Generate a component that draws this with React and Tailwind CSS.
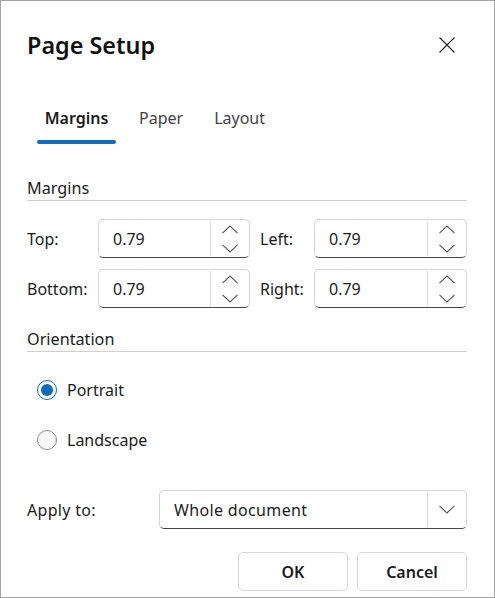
const font = { fontFamily: '"Noto Sans", "Open Sans", sans-serif' };

function Up() {
  return (
    <svg width="16" height="9" viewBox="0 0 16 9" fill="none" stroke="#555" strokeWidth="1.1">
      <path d="M0.5 8.2 L8 1 L15.5 8.2" />
    </svg>
  );
}
function Down() {
  return (
    <svg width="16" height="9" viewBox="0 0 16 9" fill="none" stroke="#555" strokeWidth="1.1">
      <path d="M0.5 0.8 L8 8 L15.5 0.8" />
    </svg>
  );
}

function Spin() {
  return (
    <div className="flex h-[39px] w-full rounded-[5px] border border-[#d4d4d4] border-b-[#444] bg-white">
      <div className="flex flex-1 items-center pl-[14px] text-[16px] text-[#1b1b1b]">0.79</div>
      <div className="my-px flex w-[39px] flex-col items-center justify-center gap-[10px] border-l border-[#d9d9d9]">
        <Up />
        <Down />
      </div>
    </div>
  );
}

function Section({ children }) {
  return (
    <div className="border-b border-[#d0d0d0] pb-[1px] text-[16.2px] leading-[22px] text-[#1b1b1b]">{children}</div>
  );
}

export default function App() {
  return (
    <div style={font} className="flex h-[598px] w-[495px] flex-col border border-[#a3a3a3] bg-white pl-[26px] pr-[27px] text-[#1b1b1b]">
      <div className="flex items-center justify-between pt-[27px]">
        <div className="text-[23.4px] font-semibold leading-[34px] text-[#111]">Page Setup</div>
        <svg className="mr-[12px]" width="16" height="16" viewBox="0 0 16 16" fill="none" stroke="#222" strokeWidth="1.1">
          <path d="M0.5 0.5 L15.5 15.5 M15.5 0.5 L0.5 15.5" />
        </svg>
      </div>

      <div className="mt-[45px] flex pl-[10px] text-[16px] leading-[22px]">
        <div className="flex w-[79px] flex-col items-center">
          <span className="font-semibold text-[#1b1b1b]">Margins</span>
          <div className="mt-[11px] h-[4px] w-full rounded-full bg-[#0f6cbd]" />
        </div>
        <span className="ml-[23px] text-[#424242]">Paper</span>
        <span className="ml-[31px] text-[#424242]">Layout</span>
      </div>

      <div className="mt-[33px]">
        <Section>Margins</Section>
      </div>

      <div className="mt-[18px] grid grid-cols-[71px_152px_64px_153px] gap-y-[11px]">
        <div className="flex items-center text-[16px]">Top:</div>
        <Spin />
        <div className="flex items-center pl-[10px] text-[16px]">Left:</div>
        <Spin />
        <div className="flex items-center text-[16px]">Bottom:</div>
        <Spin />
        <div className="flex items-center pl-[10px] text-[16px]">Right:</div>
        <Spin />
      </div>

      <div className="mt-[20px]">
        <Section>Orientation</Section>
      </div>

      <div className="mt-[28px] flex flex-col gap-[30px] pl-[10px] text-[16px]">
        <div className="flex h-[20px] items-center gap-[10px]">
          <div className="flex h-[20px] w-[20px] items-center justify-center rounded-full border border-[#0f6cbd]">
            <div className="h-[12px] w-[12px] rounded-full bg-[#0f6cbd]" />
          </div>
          <span>Portrait</span>
        </div>
        <div className="flex h-[20px] items-center gap-[10px]">
          <div className="h-[20px] w-[20px] rounded-full border border-[#8a8a8a]" />
          <span>Landscape</span>
        </div>
      </div>

      <div className="mt-[40px] flex items-center text-[16px]">
        <span className="w-[132px] tracking-[0.3px]">Apply to:</span>
        <div className="flex h-[39px] w-[308px] rounded-[5px] border border-[#d4d4d4] border-b-[#444]">
          <div className="flex flex-1 items-center pl-[14px] tracking-[0.35px]">Whole document</div>
          <div className="my-px flex w-[39px] items-center justify-center border-l border-[#d9d9d9]">
            <Down />
          </div>
        </div>
      </div>

      <div className="mt-[23px] flex justify-end gap-[9px] text-[16px] font-semibold">
        <button className="h-[39px] w-[110px] rounded-[5px] border border-[#d6d6d6] bg-white">OK</button>
        <button className="h-[39px] w-[110px] rounded-[5px] border border-[#d6d6d6] bg-white">Cancel</button>
      </div>
    </div>
  );
}
